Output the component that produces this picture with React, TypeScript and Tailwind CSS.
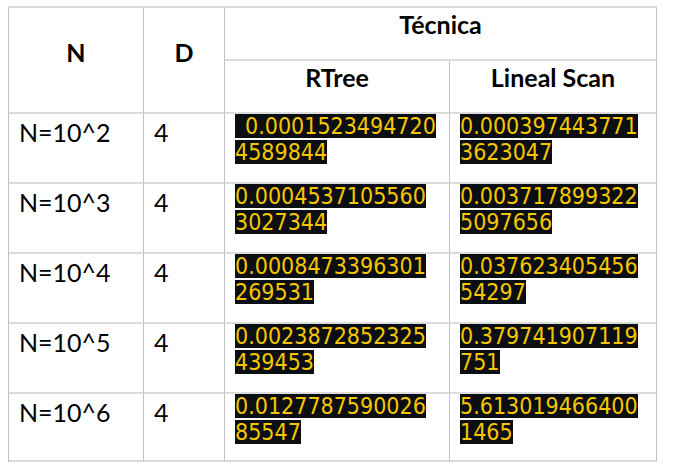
import React from "react";

type Row = { n: string; d: string; r: string[]; rLead?: boolean; l: string[] };

const rows: Row[] = [
  { n: "N=10^2", d: "4", r: ["0.0001523494720", "4589844"], rLead: true, l: ["0.000397443771", "3623047"] },
  { n: "N=10^3", d: "4", r: ["0.0004537105560", "3027344"], l: ["0.003717899322", "5097656"] },
  { n: "N=10^4", d: "4", r: ["0.0008473396301", "269531"], l: ["0.037623405456", "54297"] },
  { n: "N=10^5", d: "4", r: ["0.0023872852325", "439453"], l: ["0.379741907119", "751"] },
  { n: "N=10^6", d: "4", r: ["0.0127787590026", "85547"], l: ["5.613019466400", "1465"] },
];

function Hl({ lines, lead }: { lines: string[]; lead?: boolean }) {
  return (
    <div className="flex flex-col items-start gap-[2px]">
      {lines.map((t, i) => (
        <span
          key={i}
          className="inline-block h-[24px] whitespace-nowrap bg-[#0b0f14] font-['DejaVu_Sans_Condensed','DejaVu_Sans',sans-serif] font-stretch-condensed text-[23px] leading-[24px] text-[#f7c600]"
        >
          {i === 0 && lead ? <span className="inline-block w-[10px]" /> : null}
          {t}
        </span>
      ))}
    </div>
  );
}

const cell = "border-r border-b-2 border-r-[#c0c0c0] border-b-[#dcdcdc]";

export default function App() {
  return (
    <div className="min-h-screen bg-white pl-[8px] pt-[6px] font-['Lato',sans-serif] text-black">
      <div className="grid w-[649px] grid-cols-[135px_81px_225px_207px] grid-rows-[53px_53px_70px_70px_70px_70px_68px] border-l border-t-2 border-l-[#c0c0c0] border-t-[#dcdcdc]">
        <div className={`${cell} row-span-2 pt-[29px] text-center text-[25px] font-bold leading-[30px]`}>N</div>
        <div className={`${cell} row-span-2 pt-[29px] text-center text-[25px] font-bold leading-[30px]`}>D</div>
        <div className={`${cell} col-span-2 pt-[1px] text-center text-[25px] font-bold leading-[30px]`}>Técnica</div>
        <div className={`${cell} pt-[1px] text-center text-[25px] font-bold leading-[30px]`}>RTree</div>
        <div className={`${cell} pt-[1px] text-center text-[25px] font-bold leading-[30px]`}>Lineal Scan</div>
        {rows.map((r) => (
          <React.Fragment key={r.n}>
            <div className={`${cell} pl-[10px] pt-[3px] text-[25px] leading-[30px]`}>{r.n}</div>
            <div className={`${cell} pl-[10px] pt-[3px] text-[25px] leading-[30px]`}>{r.d}</div>
            <div className={`${cell} pl-[10px]`}>
              <Hl lines={r.r} lead={r.rLead} />
            </div>
            <div className={`${cell} pl-[10px]`}>
              <Hl lines={r.l} />
            </div>
          </React.Fragment>
        ))}
      </div>
    </div>
  );
}
